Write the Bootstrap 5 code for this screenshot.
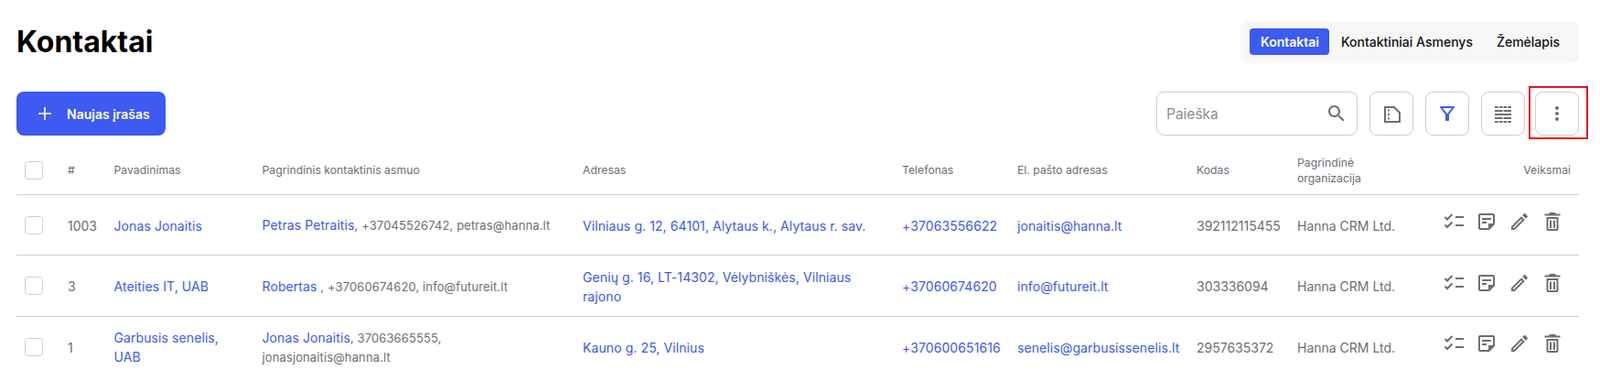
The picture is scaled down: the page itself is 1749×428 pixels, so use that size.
<!DOCTYPE html>
<html lang="lt">
<head>
    <meta charset="UTF-8">
    <meta name="viewport" content="width=device-width, initial-scale=1.0">
    <title>Kontaktai</title>
    <link rel="stylesheet" href="https://cdn.jsdelivr.net/npm/bootstrap@5.3.0/dist/css/bootstrap.min.css">
    <style>
        body { font-family: Inter, "Liberation Sans", sans-serif; font-size: 14px; color: #6b6f76; background: #fff; overflow: hidden; }
        a { color: #3d5af1; text-decoration: none; }
        .page-wrap { padding: 23px 23px 0 18px; }
        .page-title { font-size: 32px; font-weight: 700; color: #000; line-height: 46px; margin: 0; }
        .view-switch { background: #f7f7f7; border-radius: 8px; padding: 8px 8px 8px 10px; height: 46px; }
        .view-switch .nav-link { color: #111; font-size: 14px; font-weight: 450; padding: 0 13px; line-height: 29px; border-radius: 4px; }
        .view-switch .nav-link.active { background: #3d5af1; color: #fff; font-weight: 600; padding: 0 11px 0 12px; }
        .toolbar-row { margin-top: 31px; }
        .btn-new { background: #3d5af1; color: #fff; border: 0; border-radius: 8px; height: 48px; width: 163px; font-size: 14px; font-weight: 600; padding: 0 0 0 23px; gap: 16px; }
        .btn-new:hover { background: #3d5af1; color: #fff; }
        .search-box { width: 220px; height: 48px; border: 1px solid #cfcfcf; border-radius: 8px; padding: 0 10px 0 10px; }
        .search-box input { border: 0; outline: 0; padding: 1px 0 0; width: 100%; font-size: 15.5px; color: #6b6f76; }
        .search-box input::placeholder { color: #8a8d93; }
        .tool-btn { width: 48px; height: 48px; border: 1px solid #cfcfcf; border-radius: 8px; background: #fff; padding: 0; }
        .tool-gap { gap: 13px; }
        .tool-btn.flagged { position: relative; margin-left: -2px; }
        .tool-btn.flagged::after { content: ""; position: absolute; left: -8px; top: -7px; width: 65px; height: 58px; border: 2px solid #e8141c; pointer-events: none; }
        .contact-table { table-layout: fixed; width: 100%; margin: 2px 0 0; }
        .contact-table th { font-size: 12.25px; font-weight: 400; line-height: 17px; color: #6b6f76; height: 62px; padding: 10px 9px 0; vertical-align: middle; border-bottom: 1px solid #cfcfd4; }
        .contact-table td { font-size: 14px; line-height: 21px; color: #6b6f76; height: 66px; padding: 10px 9px 8px; vertical-align: middle; border-bottom: 1px solid #cfcfcf; }
        .contact-table tbody tr:nth-child(2) td { height: 67px; }
        .contact-table tr:last-child td { border-bottom: 0; }
        .contact-table td a { letter-spacing: .09px; }
        .contact-table td.person-cell { font-size: 13px; letter-spacing: .12px; }
        .contact-table td.person-cell a { font-size: 14px; }
        .w-check { width: 47px; } .w-id { width: 50.5px; } .w-name { width: 162px; } .w-person { width: 350.5px; }
        .w-address { width: 349px; } .w-phone { width: 126px; } .w-email { width: 196px; } .w-code { width: 110px; }
        .w-org { width: 150px; } .w-actions { width: auto; }
        .row-check { width: 20px; height: 20px; margin: 0; border: 1px solid #cfcfcf; border-radius: 3px; display: block; }
        .contact-table td .row-check { margin-top: -1px; }
        .row-actions { gap: 12px; padding-right: 8px; padding-bottom: 8px; }
        .row-actions svg { display: block; }
    </style>
</head>
<body>
    <svg width="0" height="0" class="position-absolute">
        <symbol id="ic-check" viewBox="0 0 24 24"><path d="M2.500 7l2.500 2.500 5.500-5.500M2.500 15.500L5 18l5.500-5.500" fill="none" stroke="#6b6f76" stroke-width="2"/><path d="M14 7h9M14 16h9" stroke="#6b6f76" stroke-width="2"/></symbol>
        <symbol id="ic-note" viewBox="0 0 24 24"><path fill="#6b6f76" d="M19 5v9h-5v5H5V5h14m0-2H5c-1.100 0-2 .9-2 2v14c0 1.100.9 2 2 2h10l6-6V5c0-1.100-.9-2-2-2zm-7 11H7v-2h5v2zm5-4H7V8h10v2z"/></symbol>
        <symbol id="ic-pencil" viewBox="0 0 24 24"><path fill="#6b6f76" d="M14.060 9.020l.92.920L5.920 19H5v-.92l9.060-9.060M17.660 3c-.25 0-.51.100-.7.290l-1.830 1.830 3.750 3.750 1.830-1.830c.39-.39.39-1.020 0-1.410l-2.340-2.340c-.2-.2-.45-.29-.71-.29zm-3.600 3.190L3 17.250V21h3.750L17.810 9.940l-3.750-3.750z"/></symbol>
        <symbol id="ic-trash" viewBox="0 0 24 24"><path fill="#6b6f76" d="M5.500 7v13c0 1.100.9 2 2 2h9c1.100 0 2-.9 2-2V7h-13zm2 2h9v11h-9V9zM9 2L8 3.500H3.500v2h17v-2H16L15 2H9z"/><path fill="#6b6f76" d="M9 10.500h2V19H9zM13 10.500h2V19h-2z"/></symbol>
    </svg>

    <div class="page-wrap">
        <div class="d-flex justify-content-between align-items-start">
            <h1 class="page-title">Kontaktai</h1>
            <ul class="nav view-switch">
                <li class="nav-item"><a class="nav-link active" href="#">Kontaktai</a></li>
                <li class="nav-item"><a class="nav-link" href="#">Kontaktiniai Asmenys</a></li>
                <li class="nav-item"><a class="nav-link" href="#">Žemėlapis</a></li>
            </ul>
        </div>

        <div class="d-flex justify-content-between toolbar-row">
            <button class="btn btn-new d-flex align-items-center" type="button">
                <svg width="16" height="16" viewBox="0 0 16 16"><path d="M8 1v14M1 8h14" stroke="#fff" stroke-width="1.700"/></svg>
                Naujas įrašas
            </button>
            <div class="d-flex tool-gap">
                <div class="search-box d-flex align-items-center">
                    <input type="text" placeholder="Paieška">
                    <svg width="24" height="24" viewBox="0 0 24 24" class="flex-shrink-0"><path fill="#6b6f76" d="M15.500 14h-.79l-.28-.27C15.410 12.590 16 11.110 16 9.500 16 5.910 13.090 3 9.500 3S3 5.910 3 9.500 5.910 16 9.500 16c1.610 0 3.090-.59 4.230-1.570l.27.280v.79l5 4.990L20.490 19l-4.990-5zm-6 0C7.010 14 5 11.990 5 9.500S7.010 5 9.500 5 14 7.010 14 9.500 11.990 14 9.500 14z"/></svg>
                </div>
                <button class="tool-btn d-flex align-items-center justify-content-center" type="button" aria-label="Eksportas">
                    <svg width="24" height="24" viewBox="0 0 24 24"><path d="M5 5h10l6 6v10H5z" fill="none" stroke="#6b6f76" stroke-width="2"/><path d="M8 7.500h2v2H8zM8 12h2v2H8zM8 16.500h2v2H8z" fill="#6b6f76"/></svg>
                </button>
                <button class="tool-btn d-flex align-items-center justify-content-center" type="button" aria-label="Filtras">
                    <svg width="24" height="24" viewBox="0 0 24 24"><path fill="#3d5af1" d="M7 6h10l-5.010 6.300L7 6zm-2.750-.39C6.270 8.200 10 13 10 13v6c0 .55.45 1 1 1h2c.55 0 1-.45 1-1v-6s3.730-4.800 5.750-7.390C20.260 4.950 19.790 4 18.950 4H5.040c-.83 0-1.300.95-.79 1.610z"/></svg>
                </button>
                <button class="tool-btn d-flex align-items-center justify-content-center" type="button" aria-label="Stulpeliai">
                    <svg width="24" height="24" viewBox="0 0 24 24"><path d="M3 5h18M3 21h18" stroke="#6b6f76" stroke-width="2" stroke-dasharray="3.750 1" fill="none"/><path d="M3 9h8.500M12.500 9H21M3 13h18M3 17h8.500M12.500 17H21" stroke="#6b6f76" stroke-width="2" fill="none"/></svg>
                </button>
                <button class="tool-btn flagged d-flex align-items-center justify-content-center" type="button" aria-label="Daugiau">
                    <svg width="24" height="24" viewBox="0 0 24 24"><circle cx="12" cy="6" r="2" fill="#6b6f76"/><circle cx="12" cy="12" r="2" fill="#6b6f76"/><circle cx="12" cy="18" r="2" fill="#6b6f76"/></svg>
                </button>
            </div>
        </div>

        <table class="contact-table">
            <colgroup>
                <col class="w-check"><col class="w-id"><col class="w-name"><col class="w-person"><col class="w-address">
                <col class="w-phone"><col class="w-email"><col class="w-code"><col class="w-org"><col class="w-actions">
            </colgroup>
            <thead>
                <tr>
                    <th><input class="form-check-input row-check" type="checkbox"></th>
                    <th>#</th>
                    <th>Pavadinimas</th>
                    <th>Pagrindinis kontaktinis asmuo</th>
                    <th>Adresas</th>
                    <th>Telefonas</th>
                    <th>El. pašto adresas</th>
                    <th>Kodas</th>
                    <th>Pagrindinė organizacija</th>
                    <th class="text-end">Veiksmai</th>
                </tr>
            </thead>
            <tbody id="rows"></tbody>
        </table>
    </div>

    <script>
        const contacts = [
            { id: '1003', name: 'Jonas Jonaitis', person: 'Petras Petraitis', rest: ', +37045526742, petras@hanna.lt', address: 'Vilniaus g. 12, 64101, Alytaus k., Alytaus r. sav.', phone: '+37063556622', email: 'jonaitis@hanna.lt', code: '392112115455' },
            { id: '3', name: 'Ateities IT, UAB', person: 'Robertas', rest: ' , +37060674620, info@futureit.lt', address: 'Genių g. 16, LT-14302, Vėlybniškės, Vilniaus rajono', phone: '+37060674620', email: 'info@futureit.lt', code: '303336094' },
            { id: '1', name: 'Garbusis senelis, UAB', person: 'Jonas Jonaitis', rest: ', 37063665555, jonasjonaitis@hanna.lt', address: 'Kauno g. 25, Vilnius', phone: '+370600651616', email: 'senelis@garbusissenelis.lt', code: '2957635372' }
        ];

        const icon = name => `<svg width="24" height="24"><use href="#ic-${name}"></use></svg>`;

        document.getElementById('rows').innerHTML = contacts.map(c => `
            <tr>
                <td><input class="form-check-input row-check" type="checkbox"></td>
                <td>${c.id}</td>
                <td><a href="#">${c.name}</a></td>
                <td class="person-cell"><a href="#">${c.person}</a>${c.rest}</td>
                <td><a href="#">${c.address}</a></td>
                <td><a href="#">${c.phone}</a></td>
                <td><a href="#">${c.email}</a></td>
                <td>${c.code}</td>
                <td>Hanna CRM Ltd.</td>
                <td><div class="row-actions d-flex justify-content-end">${icon('check')}${icon('note')}${icon('pencil')}${icon('trash')}</div></td>
            </tr>`).join('');
    </script>
    <script src="https://cdn.jsdelivr.net/npm/bootstrap@5.3.0/dist/js/bootstrap.bundle.min.js"></script>
</body>
</html>
